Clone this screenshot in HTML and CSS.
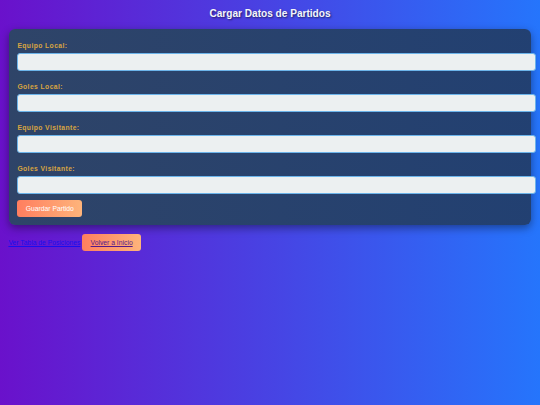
FILE: index.html
```html
<!DOCTYPE html>
<html lang="es">
<head>
<meta charset="utf-8">
<title>Cargar Datos de Partidos</title>
<link rel="stylesheet" href="styles.css">
</head>
<body>
<h1 class="title">Cargar Datos de Partidos</h1>
<form class="card">
  <div class="group">
    <label class="label" for="local">Equipo Local:</label>
    <input class="field" id="local" type="text">
  </div>
  <div class="group">
    <label class="label" for="gl">Goles Local:</label>
    <input class="field" id="gl" type="text">
  </div>
  <div class="group">
    <label class="label" for="visit">Equipo Visitante:</label>
    <input class="field" id="visit" type="text">
  </div>
  <div class="group">
    <label class="label" for="gv">Goles Visitante:</label>
    <input class="field" id="gv" type="text">
  </div>
  <button class="btn" type="button">Guardar Partido</button>
</form>
<div class="links">
  <a class="link" href="#tabla">Ver Tabla de Posiciones</a>
  <a class="link link-btn" href="#inicio">Volver a Inicio</a>
</div>
</body>
</html>
```

FILE: styles.css
```css
html {
  height: 100%;
}

body {
  margin: 0;
  padding: 8.4px;
  min-height: 100%;
  box-sizing: border-box;
  font-family: "Liberation Sans", Arial, sans-serif;
  background: linear-gradient(to right, #6a11cb, #2575fc);
}

.title {
  margin: 0 0 9px;
  text-align: center;
  color: #f4f6fa;
  font-size: 10.1px;
  line-height: 11.6px;
  font-weight: bold;
  text-shadow: 1px 1px 2px rgba(0, 0, 0, 0.55);
}

.card {
  margin: 0 1px 9px;
  padding: 13.2px 8px 8.4px;
  border-radius: 6px;
  background: linear-gradient(to right, rgba(44, 70, 100, 0.96), rgba(34, 62, 108, 0.96));
  box-shadow: 0 3px 8px rgba(0, 0, 0, 0.4);
}

.group {
  margin-bottom: 12.1px;
}

.group:last-of-type {
  margin-bottom: 6.4px;
}

.label {
  display: block;
  margin: 0 0 3px;
  color: #d9a441;
  font-size: 6.75px;
  line-height: 7.8px;
  font-weight: bold;
  letter-spacing: 0.42px;
}

.field {
  display: block;
  width: 100%;
  height: 6px;
  padding: 5px 5.5px;
  margin: 0;
  border: 0.9px solid #6cb4ea;
  border-radius: 3px;
  background: #ecf0f1;
  font-family: "Liberation Sans", Arial, sans-serif;
  font-size: 5.6px;
  outline: none;
}

.btn {
  display: block;
  margin: 0;
  padding: 4.6px 8.4px;
  border: none;
  border-radius: 3px;
  background: linear-gradient(to right, #ff7e5f, #feb47b);
  color: #ffffff;
  font-family: "Liberation Sans", Arial, sans-serif;
  font-size: 6.75px;
  line-height: 7.8px;
}

.links {
  font-size: 6.75px;
  line-height: 7.8px;
}

.link {
  color: #1a0dee;
}

.link-btn {
  display: inline-block;
  padding: 4.6px 8.4px;
  border-radius: 3px;
  background: linear-gradient(to right, #ff7e5f, #feb47b);
  color: #551a8b;
}
```
